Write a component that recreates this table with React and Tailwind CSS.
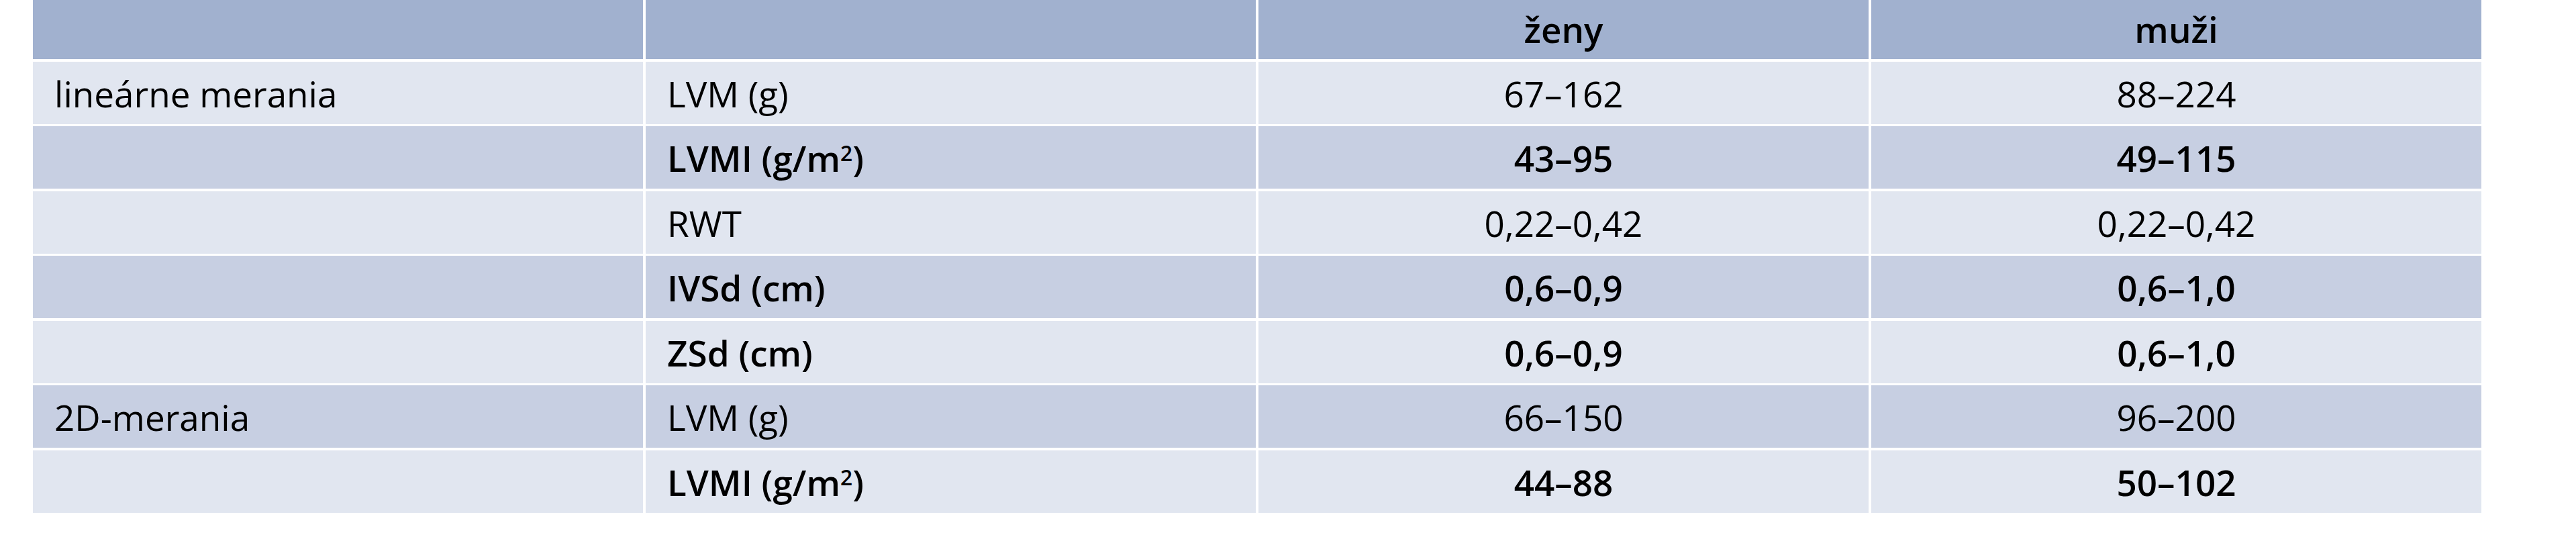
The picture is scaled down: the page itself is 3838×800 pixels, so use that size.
import React from "react";

const rows = [
  { c1: "lineárne merania", c2: "LVM (g)", z: "67–162", m: "88–224", bold: false },
  { c1: "", c2: "LVMI", sup: true, z: "43–95", m: "49–115", bold: true },
  { c1: "", c2: "RWT", z: "0,22–0,42", m: "0,22–0,42", bold: false },
  { c1: "", c2: "IVSd (cm)", z: "0,6–0,9", m: "0,6–1,0", bold: true },
  { c1: "", c2: "ZSd (cm)", z: "0,6–0,9", m: "0,6–1,0", bold: true },
  { c1: "2D-merania", c2: "LVM (g)", z: "66–150", m: "96–200", bold: false },
  { c1: "", c2: "LVMI", sup: true, z: "44–88", m: "50–102", bold: true },
];

export default function App() {
  return (
    <div
      className="w-[3838px] h-[800px] bg-white text-black text-[53px]"
      style={{ fontFamily: '"Open Sans", "Noto Sans", sans-serif' }}
    >
      <div className="ml-[49px] w-[3648px] flex flex-col gap-y-[3.5px]">
        <div className="grid grid-cols-4 gap-x-[4px] h-[88px]">
          <div className="bg-[#a1b1cf]" />
          <div className="bg-[#a1b1cf]" />
          <div className="bg-[#a1b1cf] flex items-center justify-center font-semibold">ženy</div>
          <div className="bg-[#a1b1cf] flex items-center justify-center font-semibold">muži</div>
        </div>
        {rows.map((r, i) => {
          const bg = i % 2 === 0 ? "bg-[#e1e6f0]" : "bg-[#c7cfe2]";
          const w = r.bold ? "font-semibold" : "font-medium";
          return (
            <div key={i} className="grid grid-cols-4 gap-x-[4px] h-[93px]">
              <div className={`${bg} flex items-center px-8 pt-[3px] font-medium`}>{r.c1}</div>
              <div className={`${bg} flex items-center px-8 pt-[3px] ${w}`}>
                {r.sup ? (
                  <span>
                    LVMI (g/m<sup className="text-[0.6em]">2</sup>)
                  </span>
                ) : (
                  r.c2
                )}
              </div>
              <div className={`${bg} flex items-center justify-center pt-[3px] ${w}`}>{r.z}</div>
              <div className={`${bg} flex items-center justify-center pt-[3px] ${w}`}>{r.m}</div>
            </div>
          );
        })}
      </div>
    </div>
  );
}
